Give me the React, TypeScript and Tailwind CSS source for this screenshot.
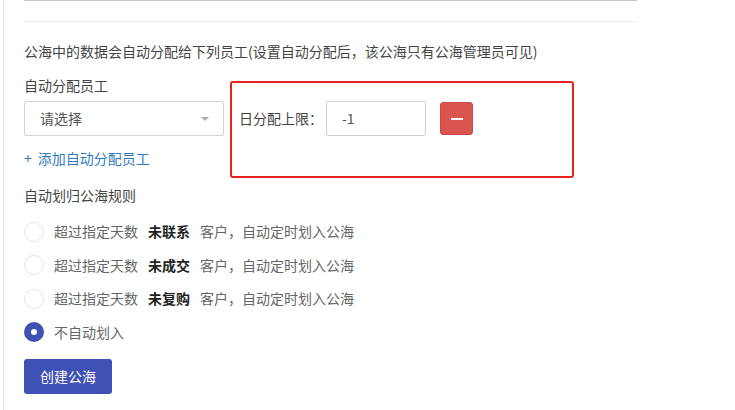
import React from "react";

const font = { fontFamily: '"Noto Sans CJK SC", "Noto Sans", sans-serif' };

function Radio({ checked }: { checked?: boolean }) {
  if (checked) {
    return (
      <span className="w-[20px] h-[20px] rounded-full bg-[#3f51b5] flex items-center justify-center shrink-0">
        <span className="w-[6px] h-[6px] rounded-full bg-white" />
      </span>
    );
  }
  return <span className="w-[20px] h-[20px] rounded-full border border-[#e3e3e3] bg-white shrink-0" />;
}

function RuleRow({ word }: { word: string }) {
  return (
    <div className="h-[33.5px] flex items-center">
      <Radio />
      <span className="ml-[10px] text-[14px] text-[#666]">超过指定天数</span>
      <span className="mx-[10px] text-[14px] font-bold text-[#222]">{word}</span>
      <span className="text-[14px] text-[#666]">客户，自动定时划入公海</span>
    </div>
  );
}

export default function App() {
  return (
    <div className="relative w-[735px] h-[410px] bg-white overflow-hidden" style={font}>
      <div className="ml-[3px] h-full border-l border-[#e6e6e6] pl-[20px]">
        <div className="w-[613px]">
          <div className="h-[1px] bg-[#c8c8c8]" />
          <div className="h-[20px]" />
          <div className="h-[1px] bg-[#ececec]" />
          <div className="mt-[19px] h-[20px] leading-[20px] text-[14px] text-[#444]">
            公海中的数据会自动分配给下列员工(设置自动分配后，该公海只有公海管理员可见)
          </div>
          <div className="mt-[14px] h-[20px] leading-[20px] text-[14px] text-[#444]">自动分配员工</div>
          <div className="mt-[6px] flex items-center">
            <div className="w-[200px] h-[35px] border border-[#d4d4d4] rounded-[2px] flex items-center justify-between pl-[15px] pr-[14px]">
              <span className="text-[14px] text-[#555]">请选择</span>
              <span className="w-0 h-0 border-l-[4px] border-r-[4px] border-t-[4px] border-l-transparent border-r-transparent border-t-[#aaa]" />
            </div>
            <span className="ml-[15px] text-[14px] text-[#444]">日分配上限：</span>
            <div className="ml-[3px] w-[100px] h-[35px] border border-[#d0d0d0] rounded-[2px] flex items-center pl-[15px]">
              <span className="text-[14px] text-[#555]">-1</span>
            </div>
            <div className="ml-[14px] w-[33px] h-[33px] rounded-[3px] bg-[#d9534f] border border-[#cc4a46] flex items-center justify-center">
              <span className="w-[12px] h-[2px] bg-white" />
            </div>
          </div>
          <div className="mt-[12px] h-[20px] leading-[20px] text-[14px] text-[#2f7bbf] flex">
            <span>+</span>
            <span className="ml-[6px]">添加自动分配员工</span>
          </div>
          <div className="mt-[17px] h-[20px] leading-[20px] text-[14px] text-[#444]">自动划归公海规则</div>
          <div className="mt-[10px]">
            <RuleRow word="未联系" />
            <RuleRow word="未成交" />
            <RuleRow word="未复购" />
            <div className="h-[33.5px] flex items-center">
              <Radio checked />
              <span className="ml-[10px] text-[14px] text-[#666]">不自动划入</span>
            </div>
          </div>
          <button className="mt-[10px] w-[88px] h-[35px] rounded-[3px] bg-[#3f51b5] text-white text-[14px]">
            创建公海
          </button>
        </div>
      </div>
      <div className="absolute left-[230px] top-[81px] w-[344px] h-[97px] border-2 border-[#e8231c] rounded-[3px]" />
    </div>
  );
}
